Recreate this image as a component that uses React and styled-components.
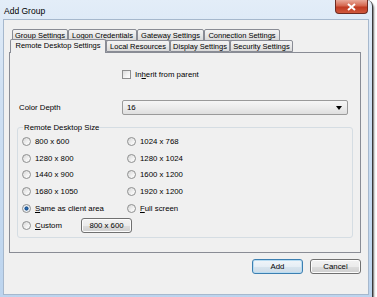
import React from "react"
import styled, { createGlobalStyle } from "styled-components"

const GlobalStyle = createGlobalStyle`
  html, body {
    margin: 0;
    padding: 0;
    background: #fff;
  }
  body {
    font-family: "Liberation Sans", Arial, sans-serif;
    font-size: 7.8px;
    color: #000;
  }
`

const Window = styled.div`
  width: 366px;
  padding: 0 3px 3px;
  background: linear-gradient(to bottom, #e3edf8 0%, #cfe0f3 30%, #bcd4ee 100%);
  border-right: 1px solid #3a3a3a;
  border-bottom: 1px solid #3a3a3a;
  border-top-right-radius: 6px;
  box-shadow: 1px 2px 2px rgba(0, 0, 0, 0.6);
`

const TitleBar = styled.div`
  height: 19px;
  display: flex;
  justify-content: space-between;
  align-items: flex-start;
`

const Title = styled.div`
  font-size: 8.5px;
  line-height: 10px;
  padding: 6px 0 0 1px;
`

const CloseButton = styled.div`
  width: 31px;
  height: 13px;
  margin-right: 1px;
  display: flex;
  align-items: center;
  justify-content: center;
  background: linear-gradient(to bottom, #e9a99a 0%, #d4664e 45%, #c03a22 55%, #d0583c 100%);
  border: 1px solid #6e2a20;
  border-top: none;
  border-radius: 0 0 4px 4px;
`

const Client = styled.div`
  height: 265px;
  border: 1px solid #a6b8cd;
  background: #f0f0f0;
  padding: 9px 7px 0 5px;
`

const TabRow = styled.div`
  display: flex;
  align-items: flex-end;
  padding-left: ${(p) => p.$indent}px;
  height: ${(p) => p.$height}px;
`

const Tab = styled.div`
  box-sizing: border-box;
  width: ${(p) => p.$w}px;
  height: ${(p) => (p.$active ? 14 : 12)}px;
  margin-bottom: ${(p) => (p.$active ? -1 : 0)}px;
  position: relative;
  z-index: ${(p) => (p.$active ? 2 : 1)};
  display: flex;
  align-items: center;
  justify-content: center;
  font-size: 7.5px;
  border: 1px solid #898c95;
  border-bottom: ${(p) => (p.$active ? "none" : "1px solid #898c95")};
  border-radius: 2px 2px 0 0;
  background: ${(p) =>
    p.$active ? "#f0f0f0" : "linear-gradient(to bottom, #f4f4f4 0%, #e9e9e9 50%, #d9d9d9 100%)"};
  padding-bottom: ${(p) => (p.$active ? 2 : 0)}px;
  white-space: nowrap;
`

const Panel = styled.div`
  box-sizing: border-box;
  width: 352px;
  height: 201px;
  border: 1px solid #898c95;
  background: #f0f0f0;
  padding-top: 16px;
`

const CheckRow = styled.label`
  display: flex;
  align-items: center;
  gap: 4px;
  padding-left: 112px;
  height: 10px;
`

const CheckBox = styled.span`
  box-sizing: border-box;
  width: 9px;
  height: 9px;
  border: 1px solid #8e8f8f;
  background: linear-gradient(135deg, #dcdcdc 0%, #f4f4f4 60%, #fff 100%);
`

const DepthRow = styled.div`
  display: grid;
  grid-template-columns: 112px 226px;
  align-items: center;
  margin-top: 21px;
`

const FieldLabel = styled.div`
  padding-left: 9px;
`

const Select = styled.div`
  box-sizing: border-box;
  height: 15px;
  display: flex;
  align-items: center;
  justify-content: space-between;
  padding: 0 5px 0 4px;
  border: 1px solid #9a9a9a;
  border-radius: 2px;
  background: linear-gradient(to bottom, #f6f6f6 0%, #ececec 50%, #dfdfdf 100%);
`

const GroupBox = styled.fieldset`
  box-sizing: border-box;
  width: 336px;
  margin: 8px 0 0 7px;
  padding: 1px 0 3px 4px;
  border: 1px solid #d5dde3;
  border-radius: 3px;
`

const Legend = styled.legend`
  padding: 0 1px;
  margin-left: 1px;
  line-height: 9px;
`

const RadioGrid = styled.div`
  display: grid;
  grid-template-columns: 105px 1fr;
  grid-auto-rows: 16.8px;
  align-items: center;
`

const RadioItem = styled.label`
  display: flex;
  align-items: center;
  gap: 4px;
  width: ${(p) => (p.$w ? `${p.$w}px` : "auto")};
`

const RadioCircle = styled.span`
  box-sizing: border-box;
  width: 9px;
  height: 9px;
  border-radius: 50%;
  border: 1px solid #8e8f8f;
  background: ${(p) =>
    p.$checked
      ? "radial-gradient(circle, #2a6fb8 0%, #1c4f8a 35%, #e8eef4 48%, #f4f4f4 100%)"
      : "linear-gradient(135deg, #d6d6d6 0%, #f2f2f2 60%, #fff 100%)"};
`

const CustomRow = styled.div`
  grid-column: 1 / span 2;
  display: flex;
  align-items: center;
`

const Button = styled.div`
  box-sizing: border-box;
  width: 51px;
  height: 15px;
  display: flex;
  align-items: center;
  justify-content: center;
  border: 1px solid ${(p) => (p.$focus ? "#3c7fb1" : "#707070")};
  border-radius: 3px;
  background: ${(p) =>
    p.$focus
      ? "linear-gradient(to bottom, #f0f5f9 0%, #e6eef5 50%, #d8e4ee 51%, #cddbe7 100%)"
      : "linear-gradient(to bottom, #f2f2f2 0%, #ebebeb 50%, #dddddd 51%, #cfcfcf 100%)"};
  box-shadow: inset 0 0 0 1px ${(p) => (p.$focus ? "#b8dcf2" : "#fcfcfc")};
`

const ButtonRow = styled.div`
  display: flex;
  justify-content: flex-end;
  gap: 7px;
  margin-top: 6px;
`

const Key = styled.u`
  text-decoration-thickness: 1px;
  text-underline-offset: 1px;
`

const Radio = ({ checked, w, children }) => (
  <RadioItem $w={w}>
    <RadioCircle $checked={checked} />
    <span>{children}</span>
  </RadioItem>
)

const App = () => {
  return (
    <>
      <GlobalStyle />
      <Window>
        <TitleBar>
          <Title>Add Group</Title>
          <CloseButton>
            <svg width="9" height="8" viewBox="0 0 9 8">
              <path d="M1 1 L8 7 M8 1 L1 7" stroke="#fff" strokeWidth="2" />
            </svg>
          </CloseButton>
        </TitleBar>
        <Client>
          <TabRow $indent={3} $height={12}>
            <Tab $w={56}>Group Settings</Tab>
            <Tab $w={69}>Logon Credentials</Tab>
            <Tab $w={67}>Gateway Settings</Tab>
            <Tab $w={76}>Connection Settings</Tab>
          </TabRow>
          <TabRow $indent={1} $height={11}>
            <Tab $w={96} $active>
              Remote Desktop Settings
            </Tab>
            <Tab $w={64}>Local Resources</Tab>
            <Tab $w={60}>Display Settings</Tab>
            <Tab $w={63}>Security Settings</Tab>
          </TabRow>
          <Panel>
            <CheckRow>
              <CheckBox />
              <span>
                In<Key>h</Key>erit from parent
              </span>
            </CheckRow>
            <DepthRow>
              <FieldLabel>Color Depth</FieldLabel>
              <Select>
                <span>16</span>
                <svg width="6" height="4" viewBox="0 0 6 4">
                  <path d="M0 0 H6 L3 4 Z" fill="#000" />
                </svg>
              </Select>
            </DepthRow>
            <GroupBox>
              <Legend>Remote Desktop Size</Legend>
              <RadioGrid>
                <Radio>800 x 600</Radio>
                <Radio>1024 x 768</Radio>
                <Radio>1280 x 800</Radio>
                <Radio>1280 x 1024</Radio>
                <Radio>1440 x 900</Radio>
                <Radio>1600 x 1200</Radio>
                <Radio>1680 x 1050</Radio>
                <Radio>1920 x 1200</Radio>
                <Radio checked>
                  <Key>S</Key>ame as client area
                </Radio>
                <Radio>
                  <Key>F</Key>ull screen
                </Radio>
                <CustomRow>
                  <Radio w={59}>
                    <Key>C</Key>ustom
                  </Radio>
                  <Button>800 x 600</Button>
                </CustomRow>
              </RadioGrid>
            </GroupBox>
          </Panel>
          <ButtonRow>
            <Button $focus>Add</Button>
            <Button>Cancel</Button>
          </ButtonRow>
        </Client>
      </Window>
    </>
  )
}

export default App
